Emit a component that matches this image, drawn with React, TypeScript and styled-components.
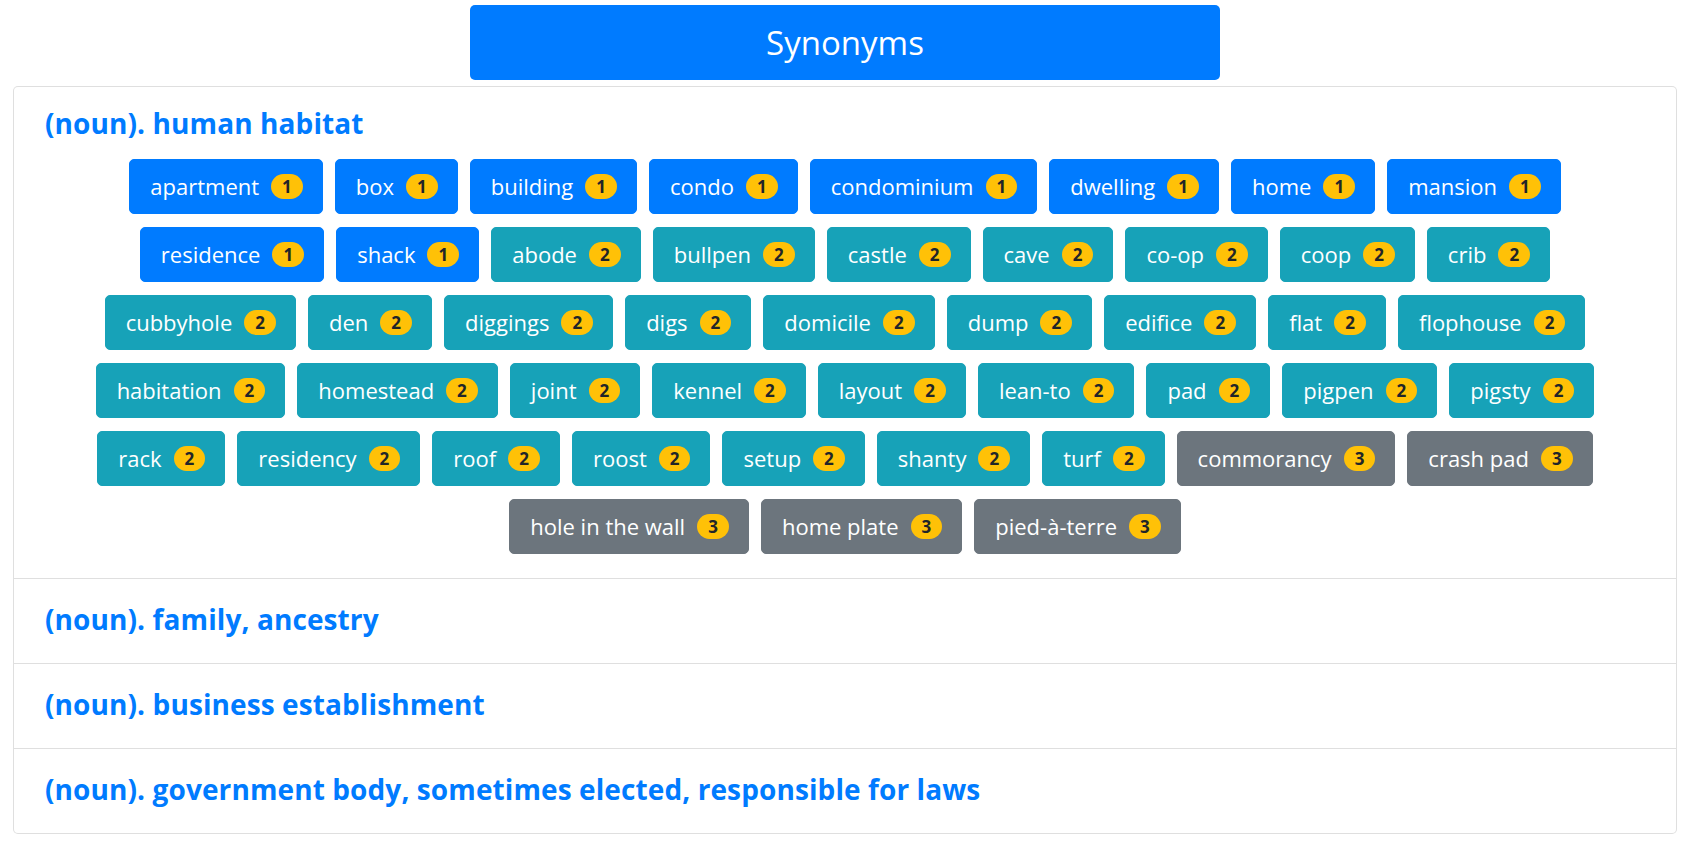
import React from "react";
import styled, { createGlobalStyle } from "styled-components";

const GlobalStyle = createGlobalStyle`
  html, body {
    margin: 0;
    padding: 0;
    background: #ffffff;
  }
  body {
    font-family: "Open Sans", "Noto Sans", "Liberation Sans", sans-serif;
    color: #212529;
  }
  * { box-sizing: border-box; }
`;

type Variant = "primary" | "info" | "secondary";

const variantColors: Record<Variant, string> = {
  primary: "#007bff",
  info: "#17a2b8",
  secondary: "#6c757d",
};

const Page = styled.div`
  padding: 5px 14px 7px 13px;
`;

const Header = styled.div`
  width: 750px;
  height: 75px;
  margin: 0 auto;
  background: #007bff;
  border-radius: 5px;
  color: #ffffff;
  font-size: 33px;
  font-weight: 400;
  display: flex;
  align-items: center;
  justify-content: center;
`;

const Card = styled.div`
  margin-top: 6px;
  border: 1px solid rgba(0, 0, 0, 0.125);
  border-radius: 5px;
  background: #ffffff;
`;

const Item = styled.section<{ $open?: boolean }>`
  padding: ${(p) => (p.$open ? "21px 31px 24px" : "25px 31px 29px")};
  & + & {
    border-top: 1px solid rgba(0, 0, 0, 0.125);
  }
`;

const Title = styled.h3`
  margin: 0;
  font-size: 28px;
  font-weight: 700;
  line-height: 30px;
  color: #007bff;
  letter-spacing: 0.1px;
`;

const Grid = styled.div`
  display: flex;
  flex-wrap: wrap;
  justify-content: center;
  gap: 13px 12px;
  margin-top: 21px;
`;

const WordButton = styled.button<{ $variant: Variant }>`
  display: inline-flex;
  align-items: center;
  height: 55px;
  padding: 0 19px 0 20px;
  border: 1px solid ${(p) => variantColors[p.$variant]};
  border-radius: 5px;
  background: ${(p) => variantColors[p.$variant]};
  color: #ffffff;
  font-family: "Open Sans", "Noto Sans", sans-serif;
  font-size: 22px;
  line-height: 33px;
  font-weight: 400;
  cursor: pointer;
`;

const Badge = styled.span`
  display: inline-block;
  margin-left: 12px;
  height: 25px;
  padding: 0 11px;
  border-radius: 13px;
  background: #ffc107;
  color: #212529;
  font-size: 17px;
  font-weight: 700;
  line-height: 25px;
`;

type Word = { text: string; level: 1 | 2 | 3 };

const levelVariant: Record<number, Variant> = {
  1: "primary",
  2: "info",
  3: "secondary",
};

const level1 = [
  "apartment",
  "box",
  "building",
  "condo",
  "condominium",
  "dwelling",
  "home",
  "mansion",
  "residence",
  "shack",
];
const level2 = [
  "abode",
  "bullpen",
  "castle",
  "cave",
  "co-op",
  "coop",
  "crib",
  "cubbyhole",
  "den",
  "diggings",
  "digs",
  "domicile",
  "dump",
  "edifice",
  "flat",
  "flophouse",
  "habitation",
  "homestead",
  "joint",
  "kennel",
  "layout",
  "lean-to",
  "pad",
  "pigpen",
  "pigsty",
  "rack",
  "residency",
  "roof",
  "roost",
  "setup",
  "shanty",
  "turf",
];
const level3 = [
  "commorancy",
  "crash pad",
  "hole in the wall",
  "home plate",
  "pied-à-terre",
];

const words: Word[] = [
  ...level1.map((text) => ({ text, level: 1 as const })),
  ...level2.map((text) => ({ text, level: 2 as const })),
  ...level3.map((text) => ({ text, level: 3 as const })),
];

const senses = [
  "(noun). human habitat",
  "(noun). family, ancestry",
  "(noun). business establishment",
  "(noun). government body, sometimes elected, responsible for laws",
];

export default function App() {
  return (
    <>
      <GlobalStyle />
      <Page>
        <Header>Synonyms</Header>
        <Card>
          {senses.map((sense, i) => (
            <Item key={sense} $open={i === 0}>
              <Title>{sense}</Title>
              {i === 0 && (
                <Grid>
                  {words.map((w) => (
                    <WordButton key={w.text} $variant={levelVariant[w.level]}>
                      {w.text}
                      <Badge>{w.level}</Badge>
                    </WordButton>
                  ))}
                </Grid>
              )}
            </Item>
          ))}
        </Card>
      </Page>
    </>
  );
}
